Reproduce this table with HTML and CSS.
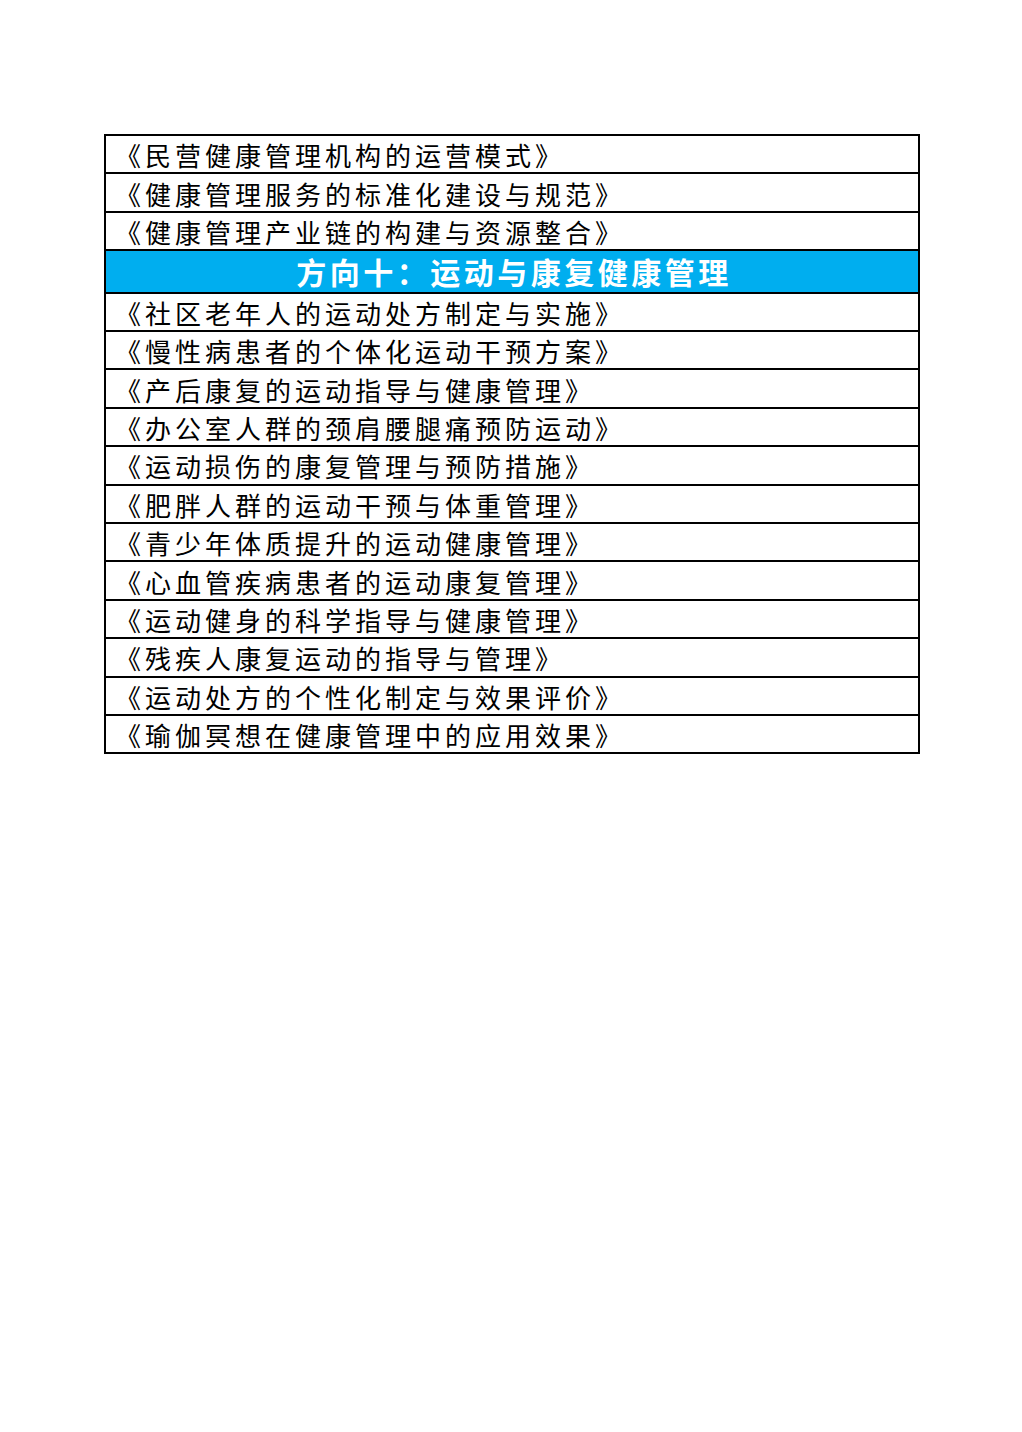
FILE: index.html
```html
<!DOCTYPE html>
<html lang="zh-CN">
<head>
<meta charset="utf-8">
<link rel="stylesheet" href="styles.css">
</head>
<body>
<div class="page">
<table class="topics">
<tbody>
<tr><td>《民营健康管理机构的运营模式》</td></tr>
<tr><td>《健康管理服务的标准化建设与规范》</td></tr>
<tr><td>《健康管理产业链的构建与资源整合》</td></tr>
<tr class="head"><td>方向十：运动与康复健康管理</td></tr>
<tr><td>《社区老年人的运动处方制定与实施》</td></tr>
<tr><td>《慢性病患者的个体化运动干预方案》</td></tr>
<tr><td>《产后康复的运动指导与健康管理》</td></tr>
<tr><td>《办公室人群的颈肩腰腿痛预防运动》</td></tr>
<tr><td>《运动损伤的康复管理与预防措施》</td></tr>
<tr><td>《肥胖人群的运动干预与体重管理》</td></tr>
<tr><td>《青少年体质提升的运动健康管理》</td></tr>
<tr><td>《心血管疾病患者的运动康复管理》</td></tr>
<tr><td>《运动健身的科学指导与健康管理》</td></tr>
<tr><td>《残疾人康复运动的指导与管理》</td></tr>
<tr><td>《运动处方的个性化制定与效果评价》</td></tr>
<tr><td>《瑜伽冥想在健康管理中的应用效果》</td></tr>
</tbody>
</table>
</div>
</body>
</html>
```

FILE: styles.css
```css
html, body {
  margin: 0;
  padding: 0;
  background: #fff;
}
.page {
  padding: 134px 0 0 104px;
}
.topics {
  border-collapse: collapse;
  width: 816px;
  font-family: "Noto Sans CJK SC", "Noto Sans CJK JP", sans-serif;
}
.topics td {
  border: 2px solid #000;
  height: 38.4px;
  padding: 2px 0 0 9px;
  font-size: 26px;
  letter-spacing: 4px;
  line-height: 34px;
  color: #000;
  white-space: nowrap;
  box-sizing: border-box;
}
.topics .head td {
  background: #00aeef;
  color: #fff;
  font-weight: 700;
  font-size: 30px;
  letter-spacing: 3.5px;
  text-align: center;
  height: 42.5px;
  padding: 0 0 0 4px;
}
```
